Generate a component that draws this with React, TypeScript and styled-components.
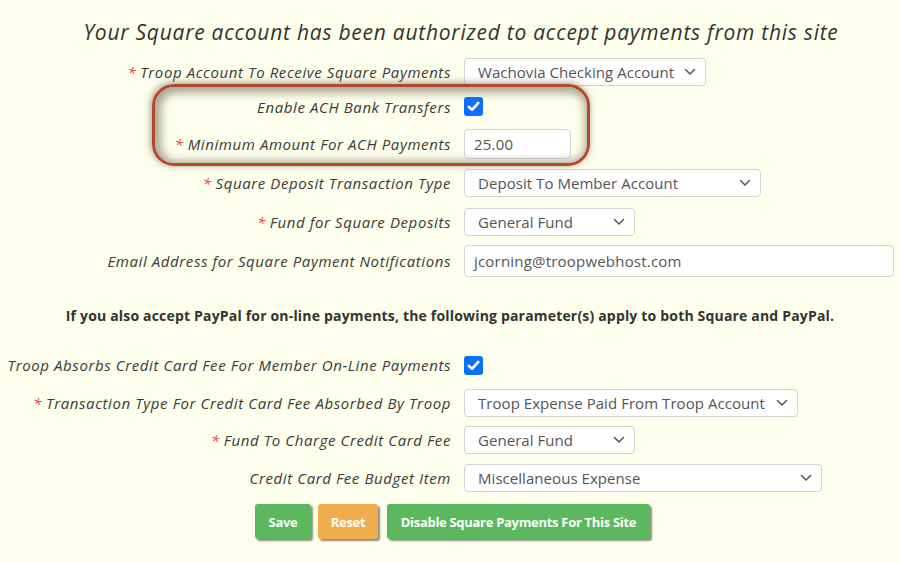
import { FC } from "react";
import styled, { createGlobalStyle } from "styled-components";

const GlobalStyle = createGlobalStyle`
    html, body {
        margin: 0;
        padding: 0;
        background: #fefeec;
    }
    body {
        font-family: "Open Sans", "Liberation Sans", sans-serif;
        color: #333;
    }
`

interface IRow {
    label: string
    required?: boolean
    height: number
    children: any
}

const Row:FC<IRow> = (props) => {
    return <RowBox h={props.height}>
        <Label>
            {props.required && <Star>*</Star>}
            {props.label}
        </Label>
        <div className="control">{props.children}</div>
    </RowBox>
}

const Chevron = () => (
    <svg width="12" height="8" viewBox="0 0 12 8">
        <path d="M1.5 1.5 L6 6 L10.5 1.5" fill="none" stroke="#555" strokeWidth="1.5" strokeLinecap="round" strokeLinejoin="round" />
    </svg>
)

const Select:FC<{ value: string, width: number }> = (props) => (
    <SelectBox w={props.width}>
        <span>{props.value}</span>
        <Chevron />
    </SelectBox>
)

const Check = () => (
    <CheckBox>
        <svg width="13" height="11" viewBox="0 0 13 11">
            <path d="M1.8 5.8 L5 8.8 L11.2 2" fill="none" stroke="#fff" strokeWidth="2.6" strokeLinecap="round" strokeLinejoin="round" />
        </svg>
    </CheckBox>
)

const App = () => {
    return <Page>
        <GlobalStyle />
        <Title>Your Square account has been authorized to accept payments from this site</Title>

        <Row required label="Troop Account To Receive Square Payments" height={34}>
            <Select value="Wachovia Checking Account" width={242} />
        </Row>
        <Row label="Enable ACH Bank Transfers" height={35}>
            <Check />
        </Row>
        <Row required label="Minimum Amount For ACH Payments" height={39}>
            <TextInput w={107} h={30}>25.00</TextInput>
        </Row>
        <Row required label="Square Deposit Transaction Type" height={39}>
            <Select value="Deposit To Member Account" width={297} />
        </Row>
        <Row required label="Fund for Square Deposits" height={39}>
            <Select value="General Fund" width={171} />
        </Row>
        <Row label="Email Address for Square Payment Notifications" height={40}>
            <TextInput w={430} h={32}>jcorning@troopwebhost.com</TextInput>
        </Row>

        <Notice>If you also accept PayPal for on-line payments, the following parameter(s) apply to both Square and PayPal.</Notice>

        <Row label="Troop Absorbs Credit Card Fee For Member On-Line Payments" height={40}>
            <Check />
        </Row>
        <Row required label="Transaction Type For Credit Card Fee Absorbed By Troop" height={36}>
            <Select value="Troop Expense Paid From Troop Account" width={334} />
        </Row>
        <Row required label="Fund To Charge Credit Card Fee" height={38}>
            <Select value="General Fund" width={171} />
        </Row>
        <Row label="Credit Card Fee Budget Item" height={38}>
            <Select value="Miscellaneous Expense" width={358} />
        </Row>

        <Buttons>
            <Button color="#5cb85c" w={56}>Save</Button>
            <Button color="#f0ad4e" w={60}>Reset</Button>
            <Button color="#5cb85c" w={263} className="wide">Disable Square Payments For This Site</Button>
        </Buttons>

        <Highlight />
    </Page>
}

export default App

const Page = styled.div`
    position: relative;
    width: 900px;
    height: 563px;
    display: flex;
    flex-direction: column;
    overflow: hidden;
`

const Title = styled.div`
    height: 55px;
    box-sizing: border-box;
    padding-top: 19px;
    padding-left: 22px;
    line-height: 26px;
    text-align: center;
    font-size: 21px;
    letter-spacing: 0.75px;
    font-style: italic;
    color: #333;
    white-space: nowrap;
`

const RowBox = styled.div<{ h: number }>`
    height: ${p=>p.h}px;
    display: grid;
    grid-template-columns: 451px 1fr;
    column-gap: 13px;
    align-items: center;
    .control {
        display: flex;
        align-items: center;
    }
`

const Label = styled.div`
    text-align: right;
    font-style: italic;
    font-size: 15px;
    letter-spacing: 0.6px;
    color: #3a3a3a;
    white-space: nowrap;
`

const Star = styled.span`
    color: #e8413a;
    margin-right: 4px;
`

const SelectBox = styled.div<{ w: number }>`
    width: ${p=>p.w}px;
    height: 28px;
    box-sizing: border-box;
    background: #fff;
    border: 1px solid #d4d4d4;
    border-radius: 4px;
    display: flex;
    align-items: center;
    justify-content: space-between;
    gap: 8px;
    padding: 0 9px 0 13px;
    font-size: 15px;
    letter-spacing: 0.05px;
    color: #555;
    white-space: nowrap;
    svg {
        flex-shrink: 0;
    }
`

const TextInput = styled.div<{ w: number, h: number }>`
    width: ${p=>p.w}px;
    height: ${p=>p.h}px;
    box-sizing: border-box;
    background: #fff;
    border: 1px solid #d4d4d4;
    border-radius: 4px;
    display: flex;
    align-items: center;
    padding: 0 9px;
    font-size: 15px;
    letter-spacing: 0.2px;
    color: #555;
`

const CheckBox = styled.span`
    width: 19px;
    height: 19px;
    border-radius: 3px;
    background: #0d6efd;
    display: flex;
    align-items: center;
    justify-content: center;
`

const Notice = styled.div`
    height: 64px;
    display: flex;
    align-items: center;
    justify-content: center;
    padding-top: 4px;
    box-sizing: border-box;
    font-weight: bold;
    font-size: 14px;
    letter-spacing: 0.18px;
    color: #333;
    white-space: nowrap;
`

const Buttons = styled.div`
    display: flex;
    gap: 7px;
    margin-top: 7px;
    padding-left: 255px;
    .wide {
        margin-left: 2px;
    }
`

const Button = styled.div<{ color: string, w: number }>`
    width: ${p=>p.w}px;
    height: 35px;
    box-sizing: border-box;
    border-radius: 3px;
    background: ${p=>p.color};
    color: #fff;
    font-weight: bold;
    font-size: 13px;
    letter-spacing: -0.3px;
    display: flex;
    align-items: center;
    justify-content: center;
    box-shadow: 2px 2px 2px rgba(0, 0, 0, 0.45);
`

const Highlight = styled.div`
    position: absolute;
    left: 152px;
    top: 84px;
    width: 438px;
    height: 82px;
    box-sizing: border-box;
    border: 3px solid #b5472f;
    border-radius: 22px;
    box-shadow: -1px -1px 6px 1px rgba(110, 110, 90, 0.55), inset 2px 2px 8px 4px rgba(110, 110, 90, 0.6);
    pointer-events: none;
`
